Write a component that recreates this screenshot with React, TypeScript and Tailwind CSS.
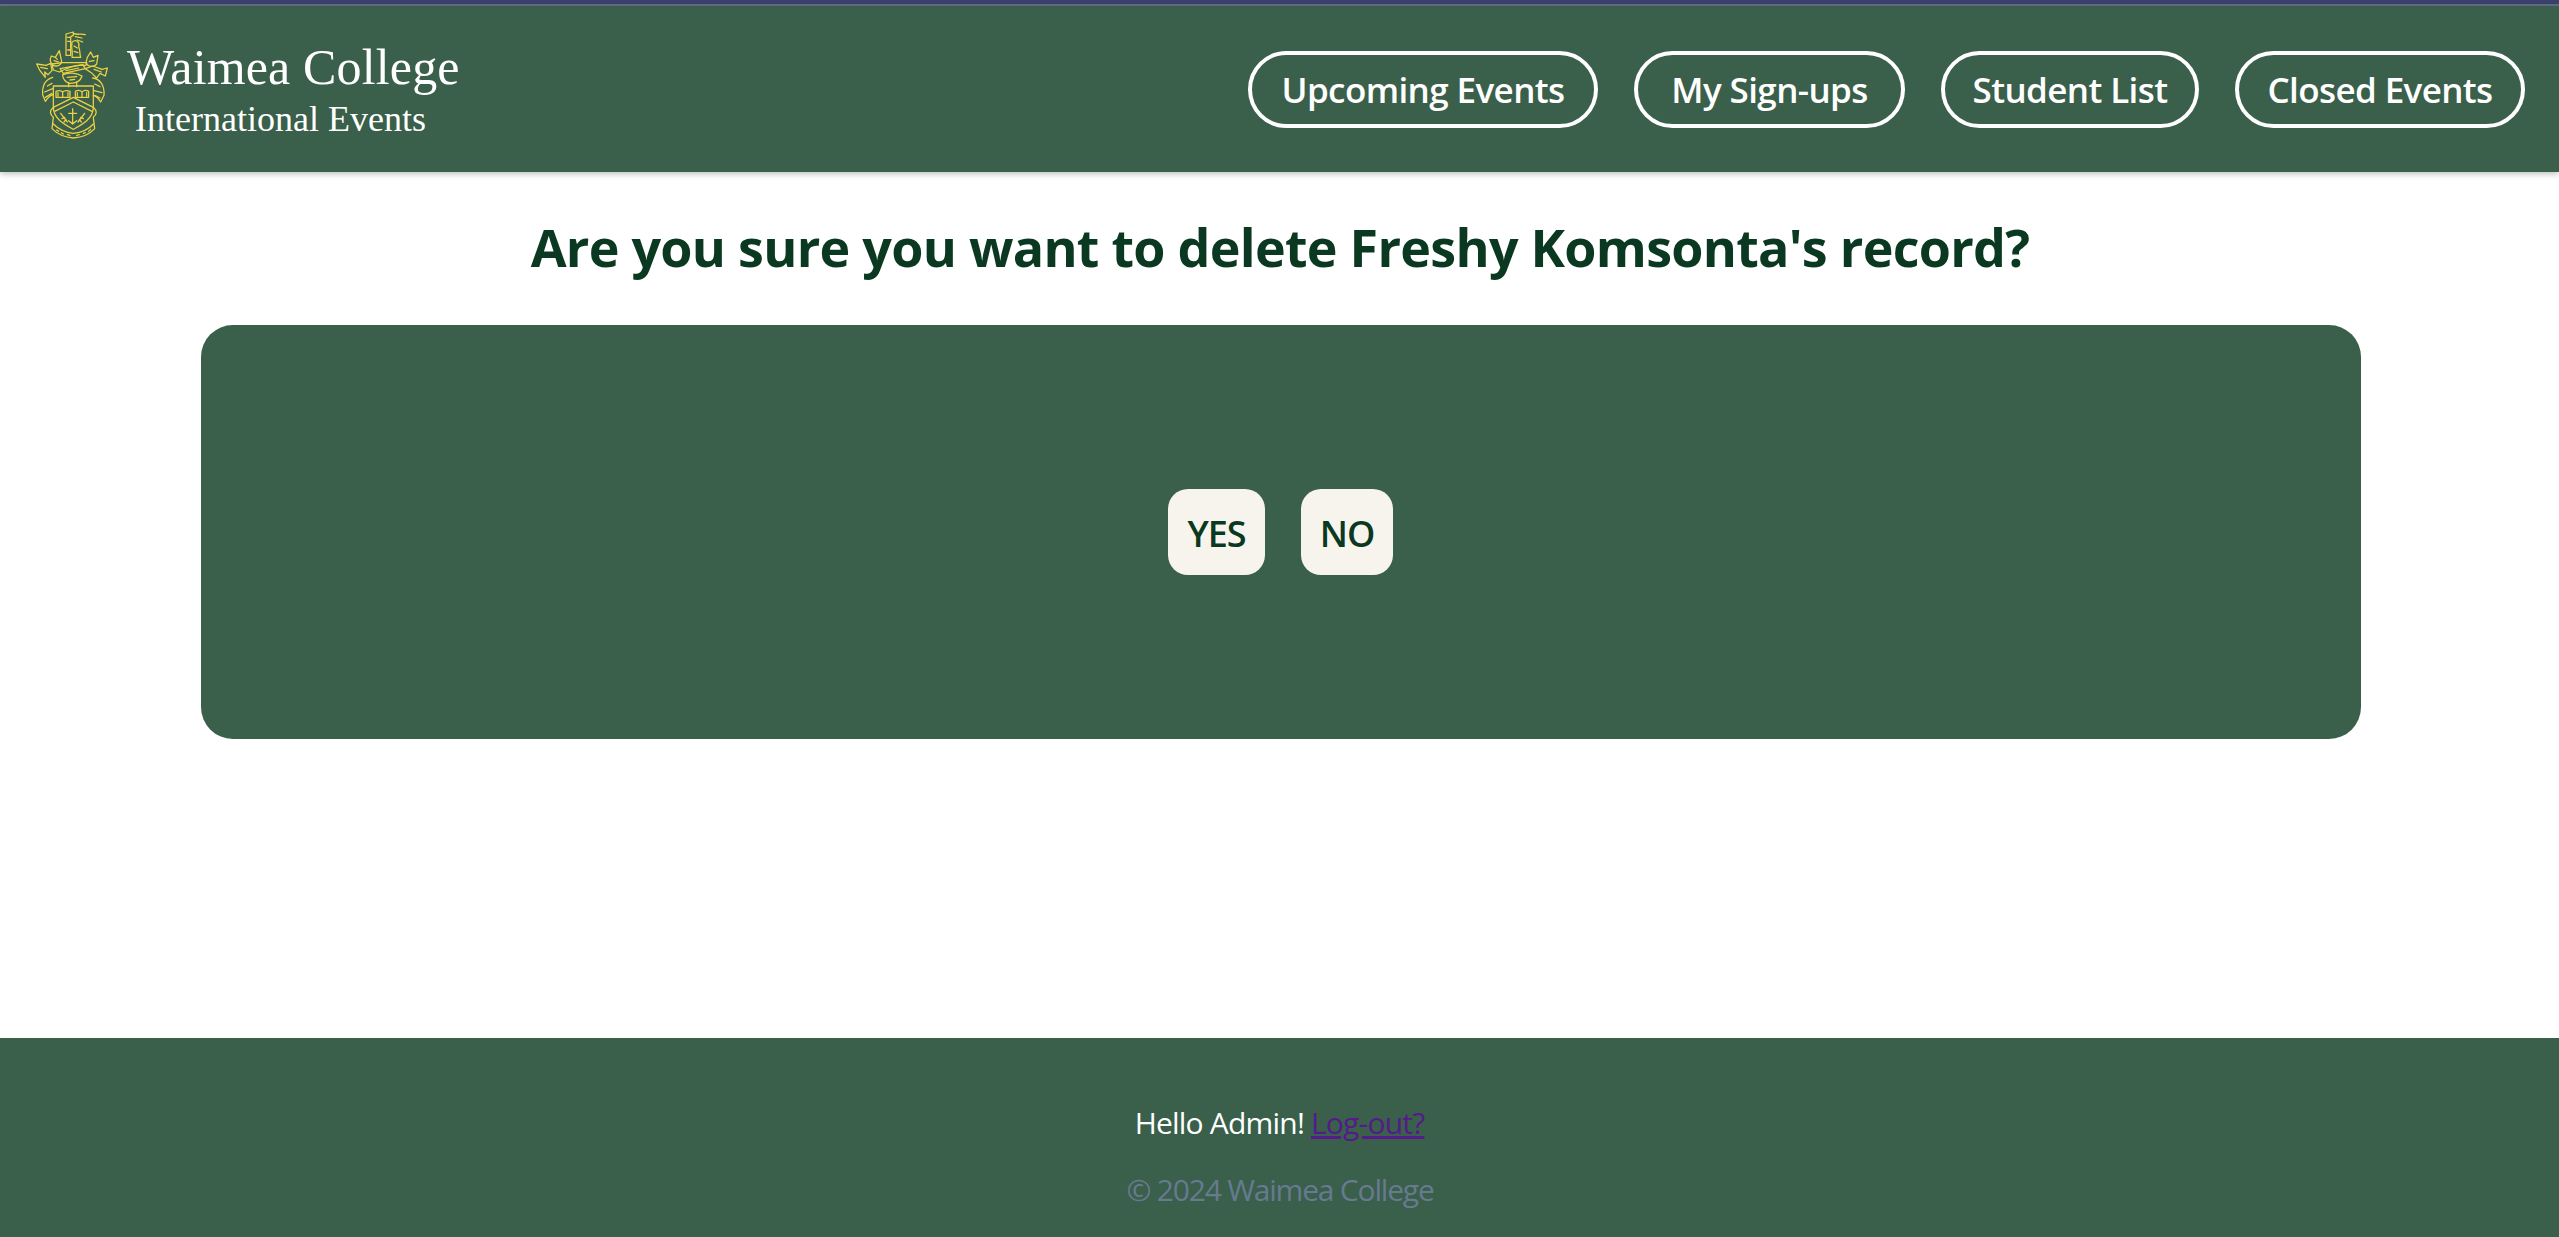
const NAV_LINKS = [
  { label: 'Upcoming Events', width: 'w-[350px]' },
  { label: 'My Sign-ups', width: 'w-[271px]' },
  { label: 'Student List', width: 'w-[258px]' },
  { label: 'Closed Events', width: 'w-[290px]' },
];

function Crest() {
  return (
    <svg
      viewBox="0 0 300 375"
      className="w-[100px] h-[125px] shrink-0"
      fill="none"
      stroke="#ecd245"
      strokeWidth="3.8"
      strokeLinejoin="round"
      strokeLinecap="round"
    >
      {/* tower and figure */}
      <path d="M138 42 L160 36 L160 46 L152 50 L152 106 L138 106 Z" />
      <path d="M142 52 L150 52 M143 64 L150 64 M143 90 L150 90" />
      <path d="M160 40 C170 46 182 40 196 44 M166 50 L186 54 M172 60 L188 66" />
      <path d="M156 66 C168 56 180 66 176 80 C182 92 178 104 182 112 L156 112 C160 98 152 84 156 66 Z" />
      <path d="M162 78 L172 84 M162 94 L174 98" />
      {/* beasts */}
      <path d="M94 108 L106 112 L118 92 L124 120 C128 132 112 142 100 136 C92 130 88 120 94 108 Z" />
      <path d="M102 122 L116 126 M106 112 L112 118" />
      <path d="M202 112 L212 96 L220 112 L234 106 L230 132 C220 144 204 140 198 128 Z" />
      <path d="M208 124 L222 122" />
      {/* helm and wreath */}
      <path d="M96 132 L126 128 L200 128 L198 136 C170 132 140 144 118 156 L100 150 Z" />
      <path d="M120 146 L188 134 L196 146 L130 160 Z M138 152 L176 144" />
      <path d="M128 164 C146 156 170 158 186 168 C182 182 168 190 150 190 C138 188 128 178 128 164 Z" />
      <path d="M142 172 L170 170 M150 180 L164 178 M146 188 L146 200 M170 186 L170 200" />
      {/* mantling left and right */}
      <path d="M50 132 L78 136 L92 130 L96 152 L84 164 L74 156 L76 172 L60 152 Z" />
      <path d="M62 142 L82 146" />
      <path d="M196 146 L218 138 L246 148 L262 144 L256 168 L240 160 L230 174 L216 160 Z" />
      <path d="M222 148 L244 156" />
      <path d="M98 172 C78 178 66 196 68 224 L76 244 C84 232 92 226 100 224" />
      <path d="M82 198 L96 190 M74 216 L98 206 M76 232 L96 220" />
      <path d="M218 174 C240 176 254 196 252 226 L242 246 C236 236 228 228 220 226" />
      <path d="M224 192 L240 200 M222 212 L246 218 M224 226 L240 234" />
      {/* shield */}
      <path d="M100 198 L220 198 L220 262 C220 296 186 314 160 328 C134 314 100 296 100 262 Z" />
      <path d="M100 262 L160 232 L220 262 M104 274 L160 246 L216 274" />
      {/* books */}
      <path d="M108 214 C118 210 124 212 128 216 C132 212 140 210 150 214 L150 232 L108 232 Z M128 216 L128 232 M114 218 L114 228 M144 218 L144 228" />
      <path d="M166 214 C174 210 182 212 186 216 C190 212 198 210 206 214 L206 232 L166 232 Z M186 216 L186 232 M172 218 L172 228 M200 218 L200 228" />
      {/* cross and wheat */}
      <path d="M158 266 L158 310 M146 280 L170 280 M146 302 L158 312 L170 302" />
      <path d="M122 280 L142 306 M126 296 L134 292 M132 306 L138 298" />
      <path d="M194 280 L174 306 M190 296 L182 292 M184 306 L178 298" />
      {/* motto banner */}
      <path d="M98 264 C88 272 90 284 100 292 L96 326 C114 344 134 352 160 354 C186 352 208 344 224 326 L220 292 C230 284 232 272 222 264" />
      <path d="M100 312 C118 330 140 338 160 340 C182 338 204 330 220 312" />
      <path d="M110 330 L116 334 M124 338 L130 342 M142 344 L150 346 M170 346 L178 344 M190 340 L196 338 M206 334 L212 328" />
    </svg>
  );
}

export default function App() {
  return (
    <div className="flex flex-col h-screen bg-white font-['Open_Sans',sans-serif]">
      <div className="h-[4px] bg-[#3b4169]" />
      <div className="h-[2px] bg-[#666c8c]" />

      <header className="flex items-center justify-between h-[166px] pl-[20px] pr-[34px] bg-[#3a5f4a] shadow-[0_2px_6px_rgba(0,0,0,0.25)]">
        <div className="flex items-start gap-[7px] self-start mt-[14px]">
          <Crest />
          <div className="mt-[19px] font-['Liberation_Serif',serif] text-white">
            <div className="text-[50px] leading-[56px] tracking-[0.15px]">Waimea College</div>
            <div className="mt-[5px] ml-[8px] text-[36px] leading-[38px]">International Events</div>
          </div>
        </div>

        <nav className="flex items-center gap-[36px]">
          {NAV_LINKS.map((link) => (
            <a
              key={link.label}
              className={`flex items-center justify-center h-[77px] pt-[3px] rounded-full border-4 border-white text-white text-[35px] font-semibold tracking-[-0.6px] ${link.width}`}
            >
              {link.label}
            </a>
          ))}
        </nav>
      </header>

      <main className="flex-1 flex flex-col items-center">
        <h1 className="mt-[38px] ml-[1px] text-[52px] leading-[74px] font-bold text-[#0a3820] tracking-[-0.72px]">
          Are you sure you want to delete Freshy Komsonta's record?
        </h1>
        <div className="flex items-center justify-center gap-[36px] w-[2160px] h-[414px] mt-[41px] ml-[2px] rounded-[32px] bg-[#3a5f4a]">
          <button className="w-[97px] h-[86px] pt-[3px] rounded-[20px] bg-[#f7f4ed] text-[#0a3820] text-[36px] font-semibold tracking-[-1px]">
            YES
          </button>
          <button className="w-[92px] h-[86px] pt-[3px] rounded-[20px] bg-[#f7f4ed] text-[#0a3820] text-[36px] font-semibold tracking-[-1px]">
            NO
          </button>
        </div>
      </main>

      <footer className="flex flex-col items-center h-[199px] pt-[62px] bg-[#3a5f4a] text-[30px]">
        <p className="leading-[46px] text-white tracking-[-0.8px]">
          Hello Admin! <a className="text-[#551a8b] underline">Log-out?</a>
        </p>
        <p className="mt-[21px] ml-[1px] leading-[46px] text-[#677a90] tracking-[-1.2px]">© 2024 Waimea College</p>
      </footer>
    </div>
  );
}
